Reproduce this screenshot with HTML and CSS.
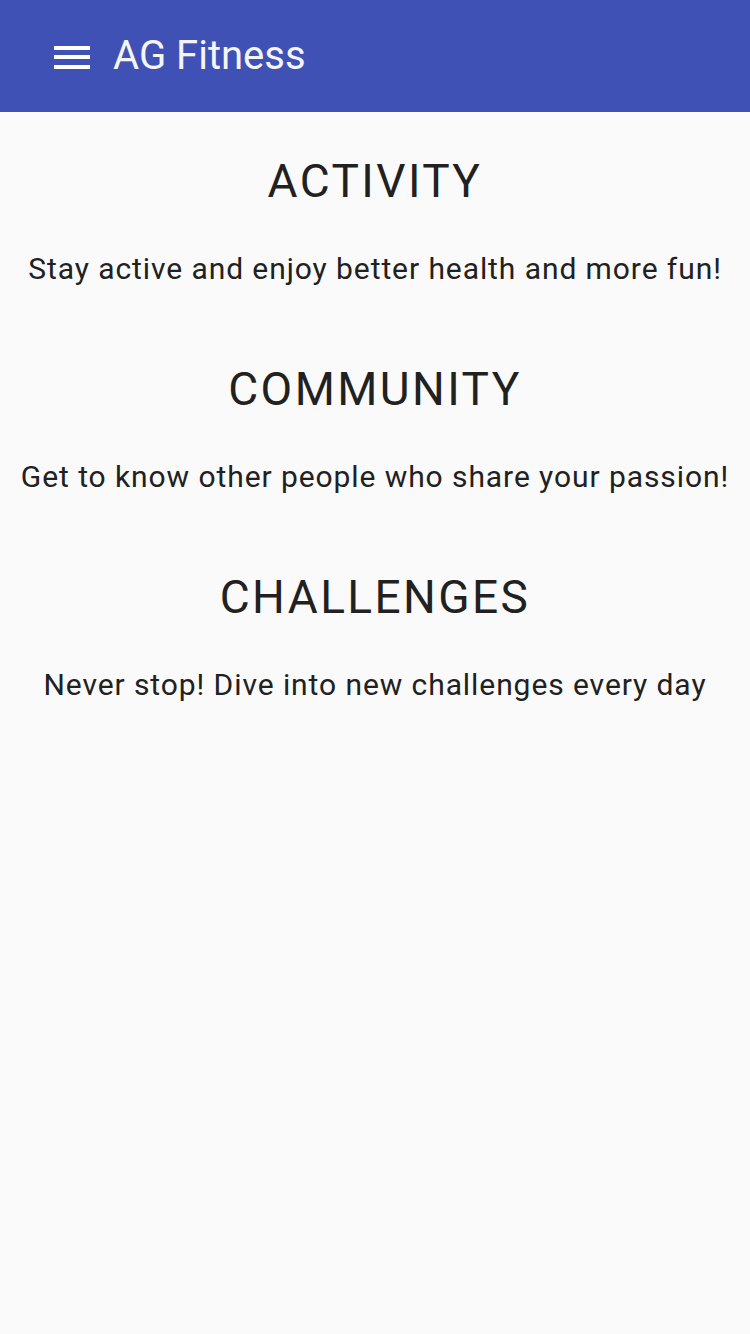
FILE: index.html
```html
<!DOCTYPE html>
<html lang="en">
<head>
<meta charset="utf-8">
<title>AG Fitness</title>
<link rel="stylesheet" href="styles.css">
</head>
<body>
<header class="app-bar">
  <button class="menu-btn" aria-label="Menu">
    <svg width="48" height="48" viewBox="0 0 48 48" aria-hidden="true">
      <rect x="6" y="14" width="36" height="4" fill="#fff"/>
      <rect x="6" y="23" width="36" height="4" fill="#fff"/>
      <rect x="6" y="33" width="36" height="4" fill="#fff"/>
    </svg>
  </button>
  <h1 class="app-title">AG Fitness</h1>
</header>
<main class="content">
  <section class="feature">
    <h2 class="feature-title">ACTIVITY</h2>
    <p class="feature-text">Stay active and enjoy better health and more fun!</p>
  </section>
  <section class="feature">
    <h2 class="feature-title">COMMUNITY</h2>
    <p class="feature-text">Get to know other people who share your passion!</p>
  </section>
  <section class="feature">
    <h2 class="feature-title">CHALLENGES</h2>
    <p class="feature-text">Never stop! Dive into new challenges every day</p>
  </section>
</main>
</body>
</html>
```
FILE: styles.css
```css
* { box-sizing: border-box; }
html, body {
  margin: 0;
  padding: 0;
  background: #fafafa;
  font-family: Roboto, "Noto Sans", "Liberation Sans", sans-serif;
  color: #212121;
}
.app-bar {
  height: 112px;
  background: #3f51b5;
  display: flex;
  align-items: center;
  padding-left: 48px;
}
.menu-btn {
  width: 48px;
  height: 48px;
  padding: 0;
  border: 0;
  background: transparent;
  display: block;
}
.menu-btn svg { display: block; }
.app-title {
  margin: 0 0 0 17px;
  font-size: 40px;
  font-weight: 400;
  color: #f5f5f5;
  line-height: 48px;
}
.content {
  padding-top: 42px;
  display: flex;
  flex-direction: column;
  gap: 73px;
  text-align: center;
}
.feature-title {
  margin: 0 0 41px;
  font-size: 46px;
  font-weight: 400;
  line-height: 54px;
  letter-spacing: 2.4px;
}
.feature-text {
  margin: 0;
  font-size: 30px;
  line-height: 40px;
  letter-spacing: 0.92px;
}
```
